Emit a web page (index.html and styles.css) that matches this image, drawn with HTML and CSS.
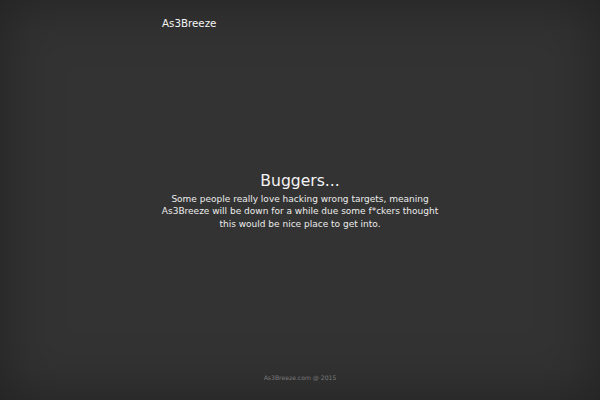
FILE: index.html
```html
<!DOCTYPE html>
<html>
<head>
<meta charset="utf-8">
<link rel="stylesheet" href="styles.css">
</head>
<body>
<div class="page">
  <header class="header"><span class="brand">As3Breeze</span></header>
  <main class="main">
    <h1 class="title">Buggers...</h1>
    <p class="message">Some people really love hacking wrong targets, meaning As3Breeze will be down for a while due some f*ckers thought this would be nice place to get into.</p>
  </main>
  <footer class="footer">As3Breeze.com @ 2015</footer>
</div>
</body>
</html>
```
FILE: styles.css
```css
html, body {
  margin: 0;
  padding: 0;
  height: 100%;
}
body {
  background: #333333;
  font-family: "DejaVu Sans", sans-serif;
  color: #eeeeee;
}
.page {
  height: 400px;
  display: flex;
  flex-direction: column;
  box-shadow: inset 0 0 60px rgba(0,0,0,0.35);
  box-sizing: border-box;
}
.header {
  padding: 12px 0 0 162px;
  height: 30px;
  box-sizing: border-box;
}
.brand {
  font-size: 10.3px;
  color: #f4f4f4;
}
.main {
  flex: 1;
  display: flex;
  flex-direction: column;
  align-items: center;
  justify-content: center;
  text-align: center;
  padding-bottom: 2px;
}
.title {
  margin: 0 0 3px;
  font-weight: normal;
  font-size: 15.6px;
  color: #f4f4f4;
}
.message {
  margin: 0;
  width: 286px;
  font-size: 9px;
  line-height: 12.5px;
  color: #ececec;
}
.footer {
  text-align: center;
  font-size: 6.1px;
  color: #7a7a7a;
  padding-bottom: 19px;
}
```
